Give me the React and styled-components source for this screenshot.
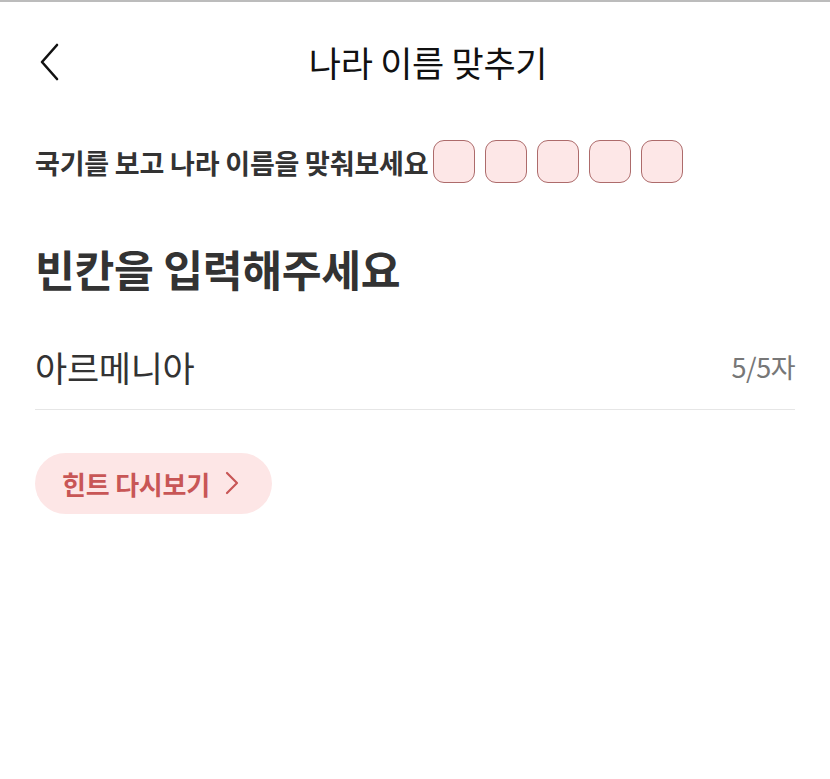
import React, { useState } from "react";
import styled, { createGlobalStyle } from "styled-components";

const GlobalStyle = createGlobalStyle`
  body {
    margin: 0;
    background: #fff;
    font-family: "Noto Sans CJK KR", "Noto Sans", sans-serif;
  }
`;

const Page = styled.div`
  border-top: 2px solid #bcbcbc;
  min-height: 777px;
  background: #fff;
`;

const Header = styled.header`
  display: grid;
  grid-template-columns: 80px 1fr 54px;
  align-items: center;
  height: 120px;
`;

const BackButton = styled.button`
  border: none;
  background: none;
  padding: 0 0 0 38px;
  height: 40px;
  display: flex;
  align-items: center;
  cursor: pointer;
`;

const Title = styled.h1`
  margin: 0;
  text-align: center;
  font-size: 35px;
  font-weight: 400;
  color: #111;
  letter-spacing: -0.3px;
  line-height: 1.2;
`;

const Content = styled.main`
  padding: 16px 35px 0 35px;
`;

const Guide = styled.div`
  display: flex;
  align-items: center;
  gap: 5px;
  height: 50px;
`;

const GuideText = styled.p`
  margin: 0;
  font-size: 27px;
  font-weight: 700;
  color: #333;
  letter-spacing: -0.2px;
  line-height: 1.2;
`;

const Slots = styled.div`
  display: flex;
  gap: 10px;
  margin-top: -4px;
`;

const Slot = styled.div`
  box-sizing: border-box;
  width: 42px;
  height: 43px;
  border: 1.6px solid #ad6b6b;
  border-radius: 11px;
  background: #fde7e7;
`;

const Heading = styled.h2`
  margin: 55px 0 0;
  font-size: 43.3px;
  font-weight: 700;
  color: #333;
  letter-spacing: -0.3px;
  line-height: 1.2;
`;

const Field = styled.label`
  display: flex;
  align-items: center;
  justify-content: space-between;
  margin-top: 51px;
  padding-bottom: 21px;
  border-bottom: 1px solid #e6e6e6;
`;

const Input = styled.input`
  flex: 1;
  min-width: 0;
  border: none;
  outline: none;
  padding: 0;
  height: 42px;
  font-family: inherit;
  font-size: 35px;
  font-weight: 400;
  color: #333;
  background: transparent;
  letter-spacing: -0.3px;
`;

const Counter = styled.span`
  font-size: 27px;
  color: #777;
  letter-spacing: -0.5px;
`;

const HintButton = styled.button`
  display: inline-flex;
  align-items: center;
  gap: 15px;
  margin-top: 43px;
  height: 61px;
  padding: 0 33px 0 27px;
  border: none;
  border-radius: 31px;
  background: #fde6e6;
  color: #c85656;
  font-family: inherit;
  font-size: 26px;
  font-weight: 700;
  letter-spacing: -0.2px;
  cursor: pointer;
`;

const App = () => {
  const [value, setValue] = useState("아르메니아");
  const max = 5;

  return (
    <>
      <GlobalStyle />
      <Page>
        <Header>
          <BackButton aria-label="뒤로">
            <svg width="22" height="38" viewBox="0 0 22 38" fill="none">
              <path d="M19 2 L4 19 L19 36" stroke="#111" strokeWidth="2.6" strokeLinecap="round" strokeLinejoin="round" />
            </svg>
          </BackButton>
          <Title>나라 이름 맞추기</Title>
          <div />
        </Header>
        <Content>
          <Guide>
            <GuideText>국기를 보고 나라 이름을 맞춰보세요</GuideText>
            <Slots>
              {Array.from({ length: max }).map((_, i) => (
                <Slot key={i} />
              ))}
            </Slots>
          </Guide>
          <Heading>빈칸을 입력해주세요</Heading>
          <Field>
            <Input
              value={value}
              maxLength={max}
              onChange={(e) => setValue(e.target.value)}
            />
            <Counter>{value.length}/{max}자</Counter>
          </Field>
          <HintButton>
            힌트 다시보기
            <svg width="14" height="24" viewBox="0 0 14 24" fill="none">
              <path d="M2 2 L12 12 L2 22" stroke="#c85656" strokeWidth="2.2" strokeLinecap="round" strokeLinejoin="round" />
            </svg>
          </HintButton>
        </Content>
      </Page>
    </>
  );
};

export default App;
